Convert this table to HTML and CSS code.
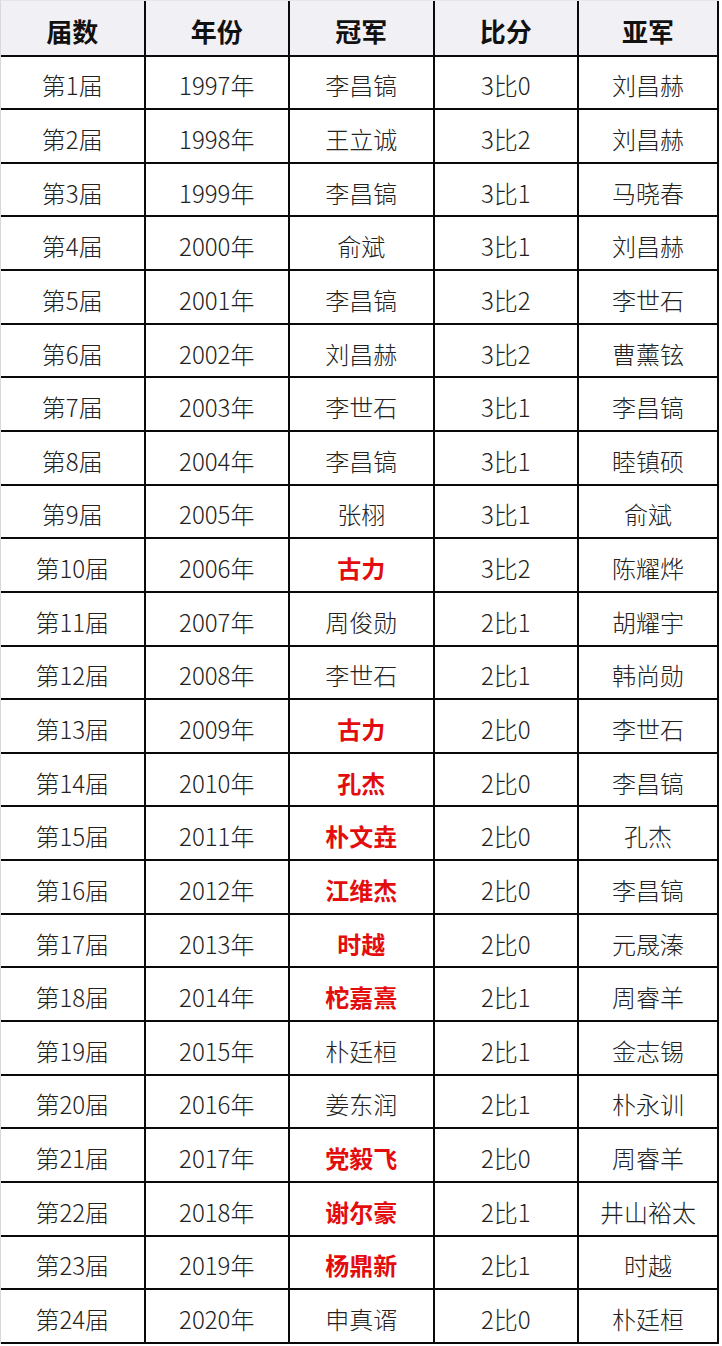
FILE: index.html
```html
<!DOCTYPE html>
<html lang="zh-CN">
<head>
<meta charset="utf-8">
<link rel="stylesheet" href="styles.css">
</head>
<body>
<div class="board">
  <div class="cell head">届数</div><div class="cell head">年份</div><div class="cell head">冠军</div><div class="cell head">比分</div><div class="cell head">亚军</div>
  <div class="cell">第1届</div><div class="cell">1997年</div><div class="cell">李昌镐</div><div class="cell">3比0</div><div class="cell">刘昌赫</div>
  <div class="cell">第2届</div><div class="cell">1998年</div><div class="cell">王立诚</div><div class="cell">3比2</div><div class="cell">刘昌赫</div>
  <div class="cell">第3届</div><div class="cell">1999年</div><div class="cell">李昌镐</div><div class="cell">3比1</div><div class="cell">马晓春</div>
  <div class="cell">第4届</div><div class="cell">2000年</div><div class="cell">俞斌</div><div class="cell">3比1</div><div class="cell">刘昌赫</div>
  <div class="cell">第5届</div><div class="cell">2001年</div><div class="cell">李昌镐</div><div class="cell">3比2</div><div class="cell">李世石</div>
  <div class="cell">第6届</div><div class="cell">2002年</div><div class="cell">刘昌赫</div><div class="cell">3比2</div><div class="cell">曹薰铉</div>
  <div class="cell">第7届</div><div class="cell">2003年</div><div class="cell">李世石</div><div class="cell">3比1</div><div class="cell">李昌镐</div>
  <div class="cell">第8届</div><div class="cell">2004年</div><div class="cell">李昌镐</div><div class="cell">3比1</div><div class="cell">睦镇硕</div>
  <div class="cell">第9届</div><div class="cell">2005年</div><div class="cell">张栩</div><div class="cell">3比1</div><div class="cell">俞斌</div>
  <div class="cell">第10届</div><div class="cell">2006年</div><div class="cell win">古力</div><div class="cell">3比2</div><div class="cell">陈耀烨</div>
  <div class="cell">第11届</div><div class="cell">2007年</div><div class="cell">周俊勋</div><div class="cell">2比1</div><div class="cell">胡耀宇</div>
  <div class="cell">第12届</div><div class="cell">2008年</div><div class="cell">李世石</div><div class="cell">2比1</div><div class="cell">韩尚勋</div>
  <div class="cell">第13届</div><div class="cell">2009年</div><div class="cell win">古力</div><div class="cell">2比0</div><div class="cell">李世石</div>
  <div class="cell">第14届</div><div class="cell">2010年</div><div class="cell win">孔杰</div><div class="cell">2比0</div><div class="cell">李昌镐</div>
  <div class="cell">第15届</div><div class="cell">2011年</div><div class="cell win">朴文垚</div><div class="cell">2比0</div><div class="cell">孔杰</div>
  <div class="cell">第16届</div><div class="cell">2012年</div><div class="cell win">江维杰</div><div class="cell">2比0</div><div class="cell">李昌镐</div>
  <div class="cell">第17届</div><div class="cell">2013年</div><div class="cell win">时越</div><div class="cell">2比0</div><div class="cell">元晟溱</div>
  <div class="cell">第18届</div><div class="cell">2014年</div><div class="cell win">柁嘉熹</div><div class="cell">2比1</div><div class="cell">周睿羊</div>
  <div class="cell">第19届</div><div class="cell">2015年</div><div class="cell">朴廷桓</div><div class="cell">2比1</div><div class="cell">金志锡</div>
  <div class="cell">第20届</div><div class="cell">2016年</div><div class="cell">姜东润</div><div class="cell">2比1</div><div class="cell">朴永训</div>
  <div class="cell">第21届</div><div class="cell">2017年</div><div class="cell win">党毅飞</div><div class="cell">2比0</div><div class="cell">周睿羊</div>
  <div class="cell">第22届</div><div class="cell">2018年</div><div class="cell win">谢尔豪</div><div class="cell">2比1</div><div class="cell">井山裕太</div>
  <div class="cell">第23届</div><div class="cell">2019年</div><div class="cell win">杨鼎新</div><div class="cell">2比1</div><div class="cell">时越</div>
  <div class="cell">第24届</div><div class="cell">2020年</div><div class="cell">申真谞</div><div class="cell">2比0</div><div class="cell">朴廷桓</div>
</div>
</body>
</html>
```
FILE: styles.css
```css
html, body {
  margin: 0;
  padding: 0;
  background: #ffffff;
}
body {
  font-family: "Noto Sans CJK SC", "Noto Sans", sans-serif;
  color: #222222;
}
.board {
  display: grid;
  grid-template-columns: repeat(4, 144.5px) 140px;
  grid-template-rows: 55.5px;
  grid-auto-rows: 53.65px;
  width: 718px;
  border-left: 1px solid #d8d8de;
  border-top: 1px solid #e4e4ea;
  box-sizing: content-box;
}
.cell {
  display: flex;
  align-items: center;
  justify-content: center;
  box-sizing: border-box;
  border-right: 2px solid #0a0a0a;
  border-bottom: 2px solid #0a0a0a;
  padding-top: 6px;
  font-size: 24px;
  line-height: 1;
  font-weight: 300;
  white-space: nowrap;
}
.head {
  background: #f1f1f5;
  font-weight: 700;
  font-size: 26px;
  color: #111;
  padding-top: 6px;
}
.win {
  color: #e30d0d;
  font-weight: 700;
}
```
